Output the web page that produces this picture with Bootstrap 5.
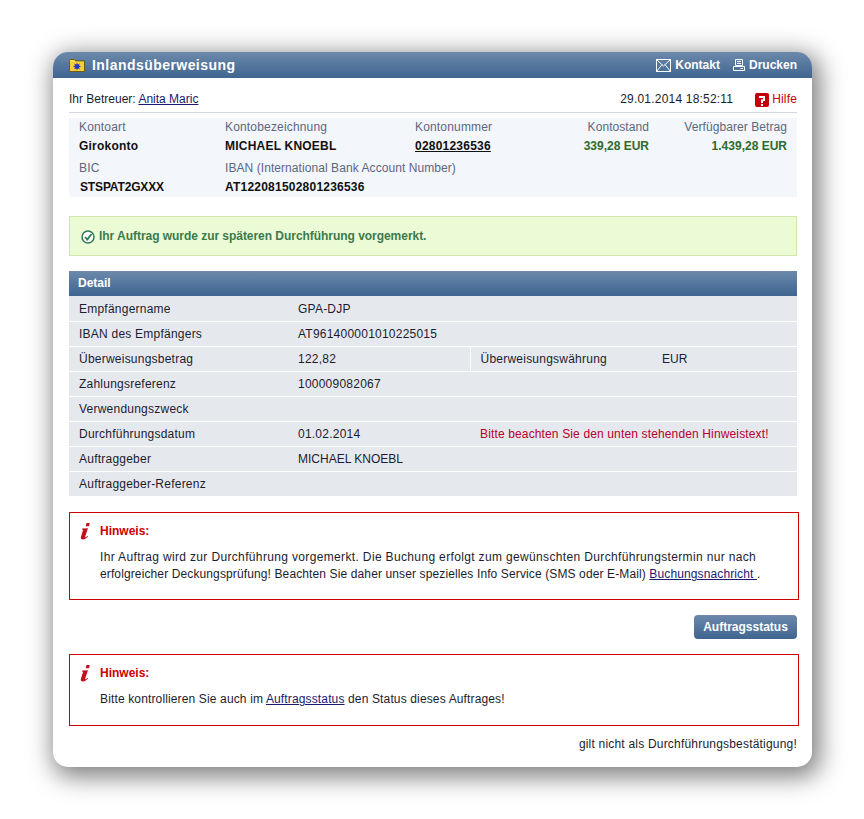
<!DOCTYPE html>
<html lang="de">
<head>
<meta charset="utf-8">
<title>Inlandsüberweisung</title>
<link href="https://cdn.jsdelivr.net/npm/bootstrap@5.3.0/dist/css/bootstrap.min.css" rel="stylesheet">
<style>
body { background: #fff; font-family: "Liberation Sans", Arial, sans-serif; font-size: 12px; color: #1c1c2e; line-height: 15px; }
.pg { padding: 52px 52px 52px 53px; }
.panel-x { width: 759px; height: 715px; background: #fff; border-radius: 15px; box-shadow: 4px 6px 24px 4px rgba(0,0,0,.5); overflow: hidden; }
.bar-grad { background: linear-gradient(#6c89ab, #3f6590); color: #fff; font-weight: 700; }
.head-x { height: 26px; padding: 0 15px 0 16px; }
.head-x h1 { font-size: 14px; font-weight: 700; margin: 0 0 0 7px; letter-spacing: .45px; line-height: 26px; }
.head-x a { color: #fff; text-decoration: none; }
.inner { padding: 0 15px 0 16px; }
.top-x { height: 35px; border-bottom: 1px solid #d3d8e2; margin-bottom: 5px; padding-top: 14px; }
.top-x a { color: #1a1a6e; }
.stamp { letter-spacing: .2px; }
.top-x .help { color: #c00; font-weight: 400; text-decoration: none; letter-spacing: .15px; margin-left: 22px; height: 15px; }
.help svg { margin-right: 3px; }
.acct { display: grid; grid-template-columns: 146px 190px 130px 104px 138px; background: #f3f6fa; height: 79px; padding: 0 10px; }
.lbl { color: #5d6780; line-height: 19px; letter-spacing: .17px; }
.lbl.tight { letter-spacing: .07px; }
.val { font-weight: 700; color: #111; line-height: 19px; letter-spacing: .22px; }
.val a { color: #111; }
.pos { color: #2f6b2a; letter-spacing: 0; }
.span4 { grid-column: span 4; }
.gap-t { margin-top: 3px; }
.bic { padding-left: 1px; letter-spacing: -.15px; }
.ok-x { margin-top: 19px; height: 40px; background: #ebfbd6; border: 1px solid #cfe6ac; color: #3c7a4a; font-weight: 700; padding-left: 11px; letter-spacing: -.04px; }
.ok-x svg { margin-right: 4px; margin-top: 2px; }
.detail-h { margin-top: 15px; height: 25px; line-height: 25px; padding-left: 9px; }
.dt { width: 100%; table-layout: fixed; margin: 0; --bs-table-bg: #e5e9ee; --bs-table-color: #1c1c2e; }
.dt td { height: 25px; padding: 1px 0 0 10px; border: 0; border-bottom: 1px solid #fff; vertical-align: middle; line-height: 15px; background: #e5e9ee; letter-spacing: .23px; }
.dt tr:first-child td { padding-top: 3px; }
.dt tr:last-child td { border-bottom: 0; }
.dt .sep { border-left: 1px solid #fff; }
.dt .warn { color: #b5002b; letter-spacing: .14px; }
.dt .caps { letter-spacing: 0; }
.note { width: 730px; border: 1px solid #c00; padding: 10px 10px 0 10px; }
.note-a { margin-top: 16px; height: 88px; }
.note-b { margin-top: 15px; height: 72px; }
.note-title { color: #c00; font-weight: 700; line-height: 15px; }
.note-title svg { margin-right: 8px; }
.note-body { margin: 9px 0 0 20px; line-height: 17px; color: #1c1c2e; letter-spacing: .14px; }
.ln-wide { letter-spacing: .35px; }
.ln-narrow { letter-spacing: .12px; }
.note a { color: #1a1a6e; }
.btn-row { margin-top: 15px; }
.btn-x { --bs-btn-padding-x: 0; --bs-btn-padding-y: 0; --bs-btn-font-size: 12px; --bs-btn-border-radius: 4px; width: 103px; height: 24px; line-height: 23px; border: 0; color: #fff; font-weight: 700; }
.btn-x:hover { color: #fff; }
.foot-x { margin-top: 11px; letter-spacing: .2px; }
.print-ic { margin-left: 13px; margin-right: 4px; }
</style>
</head>
<body>
<div class="pg">
<div class="panel-x">
  <div class="head-x bar-grad d-flex align-items-center">
    <svg width="16" height="13" viewBox="0 0 16 13"><path d="M.5 2.500V1.200L1.200.5h4.300l1 1.400H15.500v10.600H.5z" fill="#f7dc50" stroke="#6e5a10"/><rect x="1" y="3" width="14" height="9" fill="#f5cf36"/><path d="M8 3.400l.8 2 2-.8-.8 2 2 .8-2 .8.8 2-2-.8-.8 2-.8-2-2 .8.8-2-2-.8 2-.8-.8-2 2 .8z" fill="#2536c4"/></svg>
    <h1>Inlandsüberweisung</h1>
    <div class="ms-auto d-flex align-items-center">
      <svg width="15" height="13" viewBox="0 0 15 13" class="me-1"><rect x=".5" y=".5" width="14" height="12" fill="none" stroke="#fff"/><path d="M.5.5L7.500 7l7-6.500M.5 12.500L6 5.600M14.500 12.500L9 5.600" fill="none" stroke="#fff"/></svg>
      <a href="#">Kontakt</a>
      <svg width="12" height="12" viewBox="0 0 12 12" class="print-ic"><path d="M2.500.5h7v6h-7zM.5 7.500h11v4H.5zM4 2.500h4M4 4.500h4M7.500 9.500h2.500" fill="none" stroke="#fff"/></svg>
      <a href="#">Drucken</a>
    </div>
  </div>
  <div class="inner">
    <div class="top-x d-flex">
      <div>Ihr Betreuer: <a href="#">Anita Maric</a></div>
      <div class="ms-auto stamp">29.01.2014 18:52:11</div>
      <a class="help d-flex align-items-center" href="#">
        <svg width="14" height="14" viewBox="0 0 14 14"><rect width="14" height="14" rx="2" fill="#c4000c"/><path d="M4 3h6v5H8v2H6V6.500h2V5H4zM6 11h2v2H6z" fill="#fff"/></svg>Hilfe</a>
    </div>
    <div class="acct">
      <div class="lbl">Kontoart</div>
      <div class="lbl">Kontobezeichnung</div>
      <div class="lbl">Kontonummer</div>
      <div class="lbl text-end tight">Kontostand</div>
      <div class="lbl text-end tight">Verfügbarer Betrag</div>
      <div class="val">Girokonto</div>
      <div class="val">MICHAEL KNOEBL</div>
      <div class="val"><a href="#">02801236536</a></div>
      <div class="val pos text-end text-nowrap">339,28 EUR</div>
      <div class="val pos text-end text-nowrap">1.439,28 EUR</div>
      <div class="lbl gap-t">BIC</div>
      <div class="lbl gap-t span4 tight">IBAN (International Bank Account Number)</div>
      <div class="val bic">STSPAT2GXXX</div>
      <div class="val span4">AT122081502801236536</div>
    </div>
    <div class="ok-x d-flex align-items-center">
      <svg width="14" height="14" viewBox="0 0 14 14"><circle cx="7" cy="7" r="6" fill="#fff" stroke="#2f7a52" stroke-width="1.500"/><path d="M4 7l2.300 2.500L10.500 4" fill="none" stroke="#2f7a52" stroke-width="1.800"/></svg>
      Ihr Auftrag wurde zur späteren Durchführung vorgemerkt.
    </div>
    <div class="detail-h bar-grad">Detail</div>
    <table class="table dt">
      <colgroup><col style="width:219px"><col style="width:182px"><col style="width:182px"><col></colgroup>
      <tbody>
        <tr><td>Empfängername</td><td colspan="3">GPA-DJP</td></tr>
        <tr><td>IBAN des Empfängers</td><td colspan="3">AT961400001010225015</td></tr>
        <tr><td>Überweisungsbetrag</td><td>122,82</td><td class="sep">Überweisungswährung</td><td class="caps">EUR</td></tr>
        <tr><td>Zahlungsreferenz</td><td colspan="3">100009082067</td></tr>
        <tr><td colspan="4">Verwendungszweck</td></tr>
        <tr><td>Durchführungsdatum</td><td>01.02.2014</td><td colspan="2" class="warn">Bitte beachten Sie den unten stehenden Hinweistext!</td></tr>
        <tr><td>Auftraggeber</td><td colspan="3" class="caps">MICHAEL KNOEBL</td></tr>
        <tr><td colspan="4">Auftraggeber-Referenz</td></tr>
      </tbody>
    </table>
    <div class="note note-a">
      <div class="note-title d-flex align-items-center"><svg width="12" height="17" viewBox="1 0 12 17"><path d="M7.500 0h3.300L10 3.300H6.700zM3.200 5.500L9 5.200 6.200 13.500c-.2.800.5.800 1 .4l1.500-1.200.5.600C7.600 15.200 6 16.500 3.800 16.500 1.800 16.500 1.500 15 2 13.500L4 7.300c.2-.6-.2-.8-1-.7z" fill="#c4101c"/></svg>Hinweis:</div>
      <div class="note-body"><span class="ln-wide">Ihr Auftrag wird zur Durchführung vorgemerkt. Die Buchung erfolgt zum gewünschten Durchführungstermin nur nach</span><br><span class="ln-narrow">erfolgreicher Deckungsprüfung! Beachten Sie daher unser spezielles Info Service (SMS oder E-Mail) <a href="#">Buchungsnachricht </a>.</span></div>
    </div>
    <div class="d-flex justify-content-end btn-row">
      <button type="button" class="btn btn-x bar-grad">Auftragsstatus</button>
    </div>
    <div class="note note-b">
      <div class="note-title d-flex align-items-center"><svg width="12" height="17" viewBox="1 0 12 17"><path d="M7.500 0h3.300L10 3.300H6.700zM3.200 5.500L9 5.200 6.200 13.500c-.2.800.5.800 1 .4l1.500-1.200.5.600C7.600 15.200 6 16.500 3.800 16.500 1.800 16.500 1.500 15 2 13.500L4 7.300c.2-.6-.2-.8-1-.7z" fill="#c4101c"/></svg>Hinweis:</div>
      <div class="note-body">Bitte kontrollieren Sie auch im <a href="#">Auftragsstatus</a> den Status dieses Auftrages!</div>
    </div>
    <div class="foot-x text-end">gilt nicht als Durchführungsbestätigung!</div>
  </div>
</div>
</div>
</body>
</html>
